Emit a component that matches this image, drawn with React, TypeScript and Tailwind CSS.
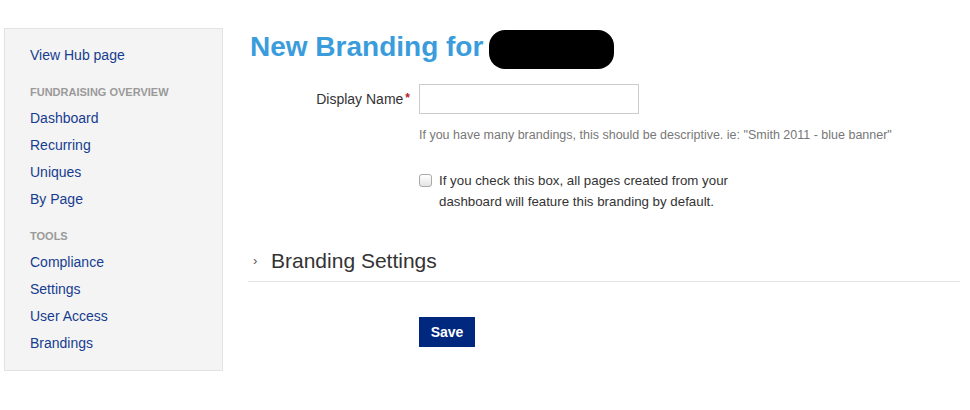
import React from 'react';

const font = { fontFamily: '"Liberation Sans", Arial, Helvetica, sans-serif' };

const overviewLinks = ['Dashboard', 'Recurring', 'Uniques', 'By Page'];
const toolLinks = ['Compliance', 'Settings', 'User Access', 'Brandings'];

const SideLink: React.FC<{ label: string }> = ({ label }) => (
  <a href="#" className="block h-[27px] text-[14px] leading-[27px] text-[#173c8f]">
    {label}
  </a>
);

const SideHeader: React.FC<{ label: string }> = ({ label }) => (
  <div className="mt-[13px] mb-[3px] h-[20px] text-[11px] font-bold uppercase leading-[20px] text-[#9a9a9a]">
    {label}
  </div>
);

const Sidebar: React.FC = () => (
  <aside className="w-[219px] shrink-0 border border-[#e3e3e3] bg-[#f4f4f4] pt-[13px] pb-[13px] pl-[25px]">
    <SideLink label="View Hub page" />
    <SideHeader label="Fundraising Overview" />
    {overviewLinks.map((l) => (
      <SideLink key={l} label={l} />
    ))}
    <SideHeader label="Tools" />
    {toolLinks.map((l) => (
      <SideLink key={l} label={l} />
    ))}
  </aside>
);

const App: React.FC = () => {
  return (
    <div className="flex items-start bg-white pl-[4px] pt-[28px] text-[#333]" style={font}>
      <Sidebar />

      <main className="ml-[25px] w-[712px]">
        {/* title */}
        <div className="mt-[3px] flex items-start pl-[2px]">
          <h1 className="h-[32px] text-[28px] font-bold leading-[32px] text-[#3b9cdc]">New Branding for</h1>
          <span className="ml-[6px] mt-[-1px] inline-block h-[39px] w-[125px] rounded-[16px] bg-black" />
        </div>

        {/* display name */}
        <div className="mt-[15px] flex items-center">
          <label className="w-[171px] pr-[9px] text-right text-[14px] text-[#333]">
            Display Name<span className="ml-[2px] align-top text-[12px] font-bold text-[#b22222]">*</span>
          </label>
          <input
            type="text"
            className="h-[30px] w-[220px] border border-[#cccccc] bg-white px-2 text-[14px] outline-none"
          />
        </div>
        <p className="ml-[171px] mt-[13px] text-[12.5px] leading-[17px] text-[#777]">
          If you have many brandings, this should be descriptive. ie: "Smith 2011 - blue banner"
        </p>

        {/* default checkbox */}
        <label className="ml-[171px] mt-[26px] flex items-start">
          <span className="mt-[4px] inline-block h-[13px] w-[13px] shrink-0 rounded-[3px] border border-[#a9a9a9] bg-gradient-to-b from-white to-[#e4e4e4]" />
          <span className="ml-[7px] w-[320px] text-[13.3px] leading-[21px] text-[#333]">
            If you check this box, all pages created from your dashboard will feature this branding by default.
          </span>
        </label>

        {/* collapsible section */}
        <div className="mt-[37px] flex items-center border-b border-[#e2e2e2] pb-[8px]">
          <span className="ml-[5px] w-[18px] text-[13px] leading-[24px] text-[#555]">›</span>
          <span className="text-[21px] leading-[24px] text-[#333]">Branding Settings</span>
        </div>

        <button
          type="button"
          className="ml-[171px] mt-[35px] h-[30px] w-[56px] bg-[#00287f] text-[14px] font-bold text-white"
        >
          Save
        </button>
      </main>
    </div>
  );
};

export default App;
